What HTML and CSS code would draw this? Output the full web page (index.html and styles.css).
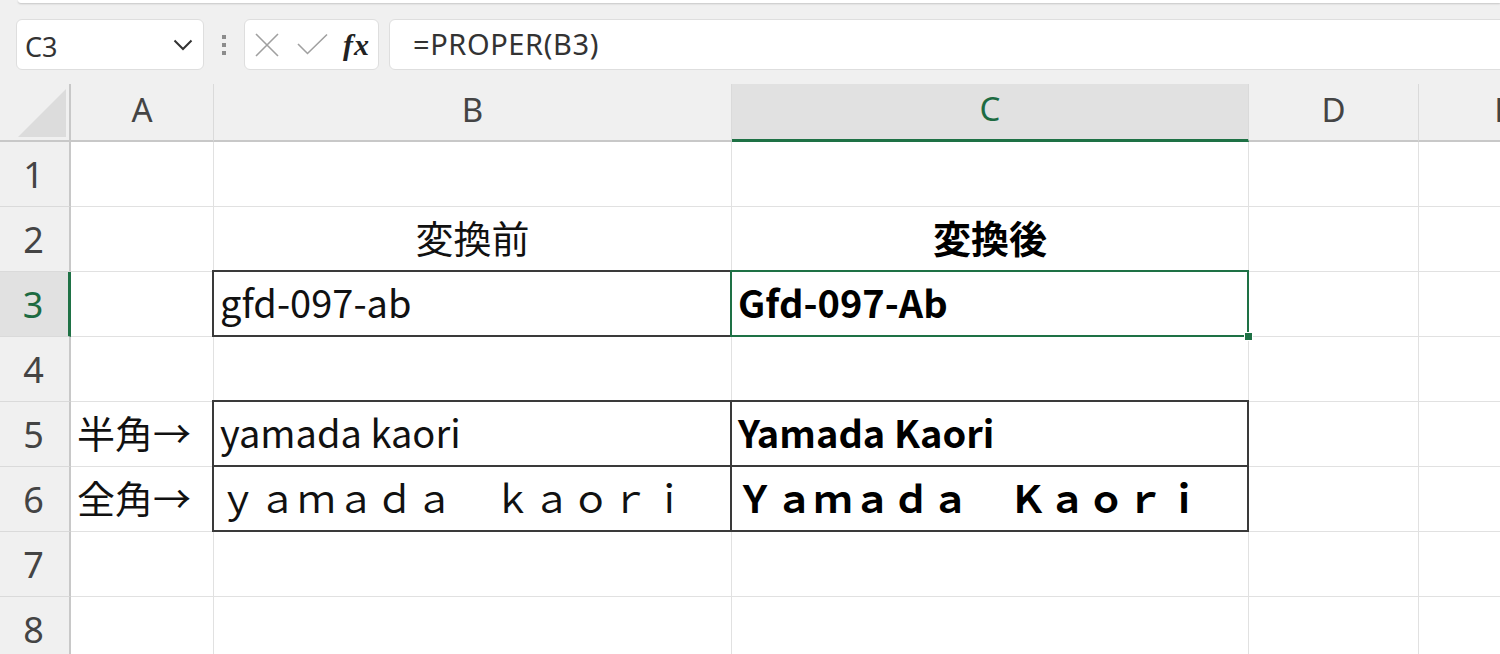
FILE: index.html
```html
<!DOCTYPE html>
<html lang="ja">
<head>
<meta charset="utf-8">
<title>PROPER</title>
<link rel="stylesheet" href="styles.css">
</head>
<body>
<div class="ribbon"></div>
<div class="fbar">
  <div class="namebox">
    <span class="ref">C3</span>
    <svg class="chev" width="20" height="12" viewBox="0 0 20 12"><path d="M1.5 1.5 L10 10 L18.5 1.5" fill="none" stroke="#333" stroke-width="2"/></svg>
  </div>
  <div class="grip"><i></i><i></i><i></i></div>
  <div class="fxbox">
    <svg class="xi" width="24" height="24" viewBox="0 0 24 24"><path d="M1 1 L23 23 M23 1 L1 23" stroke="#a0a0a0" stroke-width="1.6" fill="none"/></svg>
    <svg class="ok" width="32" height="24" viewBox="0 0 32 24"><path d="M1 11 L10.5 20.5 L30 1.5" stroke="#a0a0a0" stroke-width="1.6" fill="none"/></svg>
    <span class="fx">fx</span>
  </div>
  <div class="formula">=PROPER(B3)</div>
</div>
<div class="sheet">
  <div class="corner"><svg width="48" height="48" viewBox="0 0 48 48"><path d="M48 0 L48 48 L0 48 Z" fill="#dcdcdc"/></svg></div>
  <div class="ch">A</div>
  <div class="ch">B</div>
  <div class="ch on">C</div>
  <div class="ch">D</div>
  <div class="ch">E</div>

  <div class="rh">1</div><div class="c"></div><div class="c"></div><div class="c"></div><div class="c"></div><div class="c"></div>

  <div class="rh">2</div><div class="c"></div><div class="c ctr">変換前</div><div class="c ctr b">変換後</div><div class="c"></div><div class="c"></div>

  <div class="rh on">3</div><div class="c"></div><div class="c bx">gfd-097-ab</div><div class="c b sel">Gfd-097-Ab</div><div class="c"></div><div class="c"></div>

  <div class="rh">4</div><div class="c"></div><div class="c"></div><div class="c"></div><div class="c"></div><div class="c"></div>

  <div class="rh">5</div><div class="c">半角→</div><div class="c bx">yamada kaori</div><div class="c bx b">Yamada Kaori</div><div class="c"></div><div class="c"></div>

  <div class="rh">6</div><div class="c">全角→</div><div class="c bx fw">ｙａｍａｄａ　ｋａｏｒｉ</div><div class="c bx b fw">Ｙａｍａｄａ　Ｋａｏｒｉ</div><div class="c"></div><div class="c"></div>

  <div class="rh">7</div><div class="c"></div><div class="c"></div><div class="c"></div><div class="c"></div><div class="c"></div>

  <div class="rh">8</div><div class="c"></div><div class="c"></div><div class="c"></div><div class="c"></div><div class="c"></div>
</div>
</body>
</html>
```
FILE: styles.css
```css
html, body {
  margin: 0;
  padding: 0;
  width: 1500px;
  height: 654px;
  overflow: hidden;
  background: #f0f0f0;
  font-family: "Noto Sans", "Liberation Sans", sans-serif;
  color: #333;
}

.ribbon {
  height: 3px;
  margin-left: 18px;
  background: #fff;
  border-radius: 0 0 0 8px;
  box-shadow: 0 1px 2px rgba(0, 0, 0, 0.18);
}

.fbar {
  display: flex;
  align-items: stretch;
  height: 51px;
  padding: 16px 0 0 16px;
}

.namebox {
  box-sizing: border-box;
  width: 188px;
  background: #fff;
  border: 1px solid #dedede;
  border-radius: 6px;
  display: flex;
  align-items: center;
  justify-content: space-between;
  padding: 0 10px 0 8px;
}

.ref {
  font-size: 27px;
  color: #333;
  padding-top: 3px;
}

.chev {
  margin-top: 1px;
}

.grip {
  width: 40px;
  display: flex;
  flex-direction: column;
  align-items: center;
  justify-content: center;
  gap: 4px;
}

.grip i {
  display: block;
  width: 4px;
  height: 4px;
  background: #8c8c8c;
}

.fxbox {
  box-sizing: border-box;
  width: 135px;
  background: #fff;
  border: 1px solid #dedede;
  border-radius: 6px;
  display: flex;
  align-items: center;
  padding: 0 0 0 10px;
}

.xi {
  margin-right: 18px;
}

.ok {
  margin-right: 14px;
}

.fx {
  font-family: "Liberation Serif", "DejaVu Serif", serif;
  font-style: italic;
  font-weight: bold;
  font-size: 30px;
  color: #222;
  letter-spacing: 1px;
}

.formula {
  box-sizing: border-box;
  flex: 1;
  margin-left: 10px;
  margin-right: -12px;
  background: #fff;
  border: 1px solid #dedede;
  border-radius: 6px;
  font-size: 29px;
  letter-spacing: 0.6px;
  color: #333;
  display: flex;
  align-items: center;
  padding: 0 0 2px 23px;
}

.sheet {
  margin-top: 14px;
  width: 1589px;
  display: grid;
  grid-template-columns: 71px 143px 518px 517px 170px 170px;
  grid-template-rows: 58px repeat(8, 65px);
}

.corner {
  box-sizing: border-box;
  background: #f0f0f0;
  border-right: 2px solid #c8c8c8;
  border-bottom: 2px solid #c8c8c8;
  display: flex;
  align-items: flex-start;
  justify-content: flex-start;
  padding: 5px 0 0 18px;
}

.ch {
  box-sizing: border-box;
  background: #f0f0f0;
  border-right: 1px solid #dadada;
  border-bottom: 2px solid #c8c8c8;
  display: flex;
  align-items: center;
  justify-content: center;
  font-size: 33px;
  color: #444;
  padding-bottom: 6px;
}

.ch.on {
  background: #e1e1e1;
  color: #1d6b42;
  border-bottom: 3px solid #1e7145;
}

.rh {
  box-sizing: border-box;
  background: #f0f0f0;
  border-right: 2px solid #c8c8c8;
  border-bottom: 1px solid #dadada;
  display: flex;
  align-items: center;
  justify-content: center;
  font-size: 36px;
  color: #444;
  padding: 0 2px 0 0;
}

.rh.on {
  background: #e1e1e1;
  color: #1d6b42;
  border-right: 3px solid #1e7145;
}

.c {
  position: relative;
  box-sizing: border-box;
  background: #fff;
  border-right: 1px solid #e1e1e1;
  border-bottom: 1px solid #e1e1e1;
  display: flex;
  align-items: center;
  padding: 0 0 5px 6px;
  font-family: "Noto Sans CJK JP", "Noto Sans", sans-serif;
  font-size: 38px;
  color: #111;
  white-space: nowrap;
  overflow: visible;
}

.ctr {
  justify-content: center;
  padding: 0 0 5px 0;
}

.b {
  font-weight: bold;
  color: #000;
}

.fw {
  letter-spacing: 1.2px;
  padding-left: 5px;
}

.b.fw {
  letter-spacing: 1px;
  padding-left: 4px;
}

.bx::after {
  content: "";
  position: absolute;
  top: -2px;
  left: -2px;
  right: -1px;
  bottom: -1px;
  border: 2px solid #3a3a3a;
  pointer-events: none;
  z-index: 1;
}

.sel::after {
  content: "";
  position: absolute;
  top: -2px;
  left: -2px;
  right: -1px;
  bottom: -1px;
  border: 2px solid #1e7145;
  z-index: 2;
}

.sel::before {
  content: "";
  position: absolute;
  right: -5px;
  bottom: -5px;
  width: 7px;
  height: 7px;
  background: #1e7145;
  border: 1px solid #fff;
  z-index: 3;
}
```
